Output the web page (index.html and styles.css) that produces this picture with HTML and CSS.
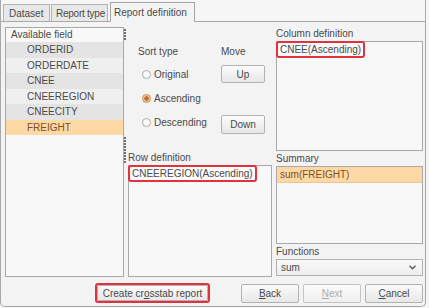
FILE: index.html
```html
<!DOCTYPE html>
<html>
<head>
    <meta charset="utf-8">
    <title>Report definition</title>
    <link rel="stylesheet" href="styles.css">
</head>
<body>
    <div class="dialog">
        <div class="tabs">
            <div class="tab tab-dataset">Dataset</div>
            <div class="tab tab-type">Report type</div>
            <div class="tab tab-def active">Report definition</div>
        </div>

        <div class="panel">
            <div class="main">
                <div class="field-list">
                    <div class="list-head">Available field</div>
                    <div class="field">ORDERID</div>
                    <div class="field">ORDERDATE</div>
                    <div class="field">CNEE</div>
                    <div class="field">CNEEREGION</div>
                    <div class="field">CNEECITY</div>
                    <div class="field selected">FREIGHT</div>
                </div>

                <div class="splitter">
                    <div class="grip short"></div>
                    <div class="grip long"></div>
                </div>

                <div class="middle">
                    <div class="sort-area">
                        <div class="sort-col">
                            <div class="caption">Sort type</div>
                            <div class="radio"><span class="dot"></span>Original</div>
                            <div class="radio"><span class="dot checked"></span>Ascending</div>
                            <div class="radio"><span class="dot"></span>Descending</div>
                        </div>
                        <div class="move-col">
                            <div class="caption">Move</div>
                            <button class="btn up">Up</button>
                            <button class="btn down">Down</button>
                        </div>
                    </div>
                    <div class="box-label">Row definition</div>
                    <div class="box row-box">
                        <span class="marked">CNEEREGION(Ascending)</span>
                    </div>
                </div>

                <div class="right">
                    <div class="box-label">Column definition</div>
                    <div class="box col-box">
                        <span class="marked">CNEE(Ascending)</span>
                    </div>
                    <div class="box-label">Summary</div>
                    <div class="box sum-box">
                        <div class="sum-item">sum(FREIGHT)</div>
                    </div>
                    <div class="box-label">Functions</div>
                    <div class="combo">
                        <span>sum</span>
                        <svg width="7" height="5" viewBox="0 0 7 5"><path d="M0.5 0.8 L3.5 3.8 L6.5 0.8" fill="none" stroke="#555" stroke-width="1.3"/></svg>
                    </div>
                </div>
            </div>

            <div class="footer">
                <span class="marked-btn"><button class="btn create">Create cr<u>o</u>sstab report</button></span>
                <button class="btn nav"><u>B</u>ack</button>
                <button class="btn nav" disabled><u>N</u>ext</button>
                <button class="btn nav"><u>C</u>ancel</button>
            </div>
        </div>
    </div>
</body>
</html>
```

FILE: styles.css
```css
body {
    margin: 0;
    width: 429px;
    height: 308px;
    background: #f6f6f6;
    font-family: "Liberation Sans", Arial, sans-serif;
    font-size: 10px;
    color: #4a4a4a;
}

.dialog {
    width: 426px;
    height: 307px;
    box-sizing: border-box;
    border: 1px solid #a8a8a8;
    border-top: none;
    border-radius: 0 0 5px 5px;
    display: flex;
    flex-direction: column;
    background: #f3f3f3;
}

.tabs {
    height: 21px;
    display: flex;
    align-items: flex-end;
    padding-left: 2px;
    background: #f6f6f6;
}

.tab {
    height: 17px;
    line-height: 17px;
    padding-left: 5px;
    box-sizing: border-box;
    border: 1px solid #b4b4b4;
    border-bottom: none;
    background: #e8e8e8;
    color: #4a4a4a;
    white-space: nowrap;
    overflow: hidden;
}

.tab-dataset {
    width: 47px;
}

.tab-type {
    width: 57px;
    margin-left: 1px;
    padding-left: 4px;
    letter-spacing: -0.25px;
}

.tab.active {
    width: 85px;
    height: 20px;
    line-height: 19px;
    margin-left: 2px;
    margin-bottom: -1px;
    padding-left: 3px;
    background: #f3f3f3;
    border-color: #a4a4a4;
    position: relative;
}

.panel {
    flex: 1;
    border-top: 1px solid #a8a8a8;
    padding: 5px 2px 0 4px;
    display: flex;
    flex-direction: column;
}

.main {
    height: 250px;
    display: flex;
}

.field-list {
    width: 119px;
    box-sizing: border-box;
    border: 1px solid #a8a8a8;
    background: #f8f8f8;
}

.list-head {
    height: 14px;
    line-height: 13px;
    padding-left: 5px;
}

.field {
    height: 15.5px;
    line-height: 15.5px;
    padding-left: 21px;
    background: #efefef;
}

.field:nth-child(even) {
    background: #e4e4e4;
}

.field.selected {
    background: #fcd8a5;
    color: #7c5124;
}

.splitter {
    width: 4px;
    flex: none;
    display: grid;
    grid-template-rows: 2px 11px 97px 26px;
    align-content: start;
}

.grip {
    width: 2px;
    background: repeating-linear-gradient(to bottom, #6e6e6e 0, #6e6e6e 2px, transparent 2px, transparent 3px);
}

.grip.short {
    grid-row: 2;
}

.grip.long {
    grid-row: 4;
}

.middle {
    width: 144px;
    display: flex;
    flex-direction: column;
    margin-right: 4px;
}

.sort-area {
    height: 123px;
    display: flex;
    padding: 18px 0 0 10px;
    box-sizing: border-box;
}

.caption {
    height: 14px;
    line-height: 14px;
}

.sort-col {
    width: 83px;
}

.sort-col .caption {
    margin-bottom: 3px;
}

.radio {
    height: 24px;
    display: flex;
    align-items: center;
    padding-left: 4px;
    gap: 3px;
}

.dot {
    width: 9px;
    height: 9px;
    box-sizing: border-box;
    border: 1px solid #ababab;
    border-radius: 50%;
    background: #fbfbfb;
}

.dot.checked {
    border-color: #c48a52;
    background: radial-gradient(circle, #c0702e 0 2px, #f3cfa5 2.5px);
}

.move-col {
    width: 44px;
    display: flex;
    flex-direction: column;
}

.btn {
    font-family: inherit;
    font-size: 10px;
    color: #4a4a4a;
    border: 1px solid #b2b2b2;
    border-radius: 2px;
    background: linear-gradient(#fbfbfb, #e7e7e7);
    padding: 0;
    box-sizing: border-box;
}

.up {
    margin-top: 6px;
    height: 18px;
}

.down {
    margin-top: 32px;
    height: 19px;
}

.box-label {
    height: 15px;
    line-height: 16px;
}

.right .box-label:first-child {
    height: 14px;
    line-height: 13px;
}

.box {
    box-sizing: border-box;
    border: 1px solid #a8a8a8;
    background: #f8f8f8;
}

.row-box {
    flex: 1;
}

.marked {
    display: inline-block;
    margin: -1px 0 0 -1px;
    height: 17px;
    line-height: 13px;
    padding: 0 2px;
    box-sizing: border-box;
    border: 2px solid #e2323f;
    border-radius: 3px;
    background: #fafafa;
}

.right {
    width: 147px;
    display: flex;
    flex-direction: column;
}

.col-box {
    height: 110px;
}

.sum-box {
    height: 78px;
}

.sum-item {
    height: 15px;
    line-height: 15px;
    padding-left: 3px;
    background: #fcd8a5;
    border-bottom: 1px solid #efc48e;
    color: #7c5124;
}

.combo {
    height: 17px;
    box-sizing: border-box;
    border: 1px solid #b0b0b0;
    background: linear-gradient(#fafafa, #ededed);
    display: flex;
    align-items: center;
    justify-content: space-between;
    padding: 0 6px 0 4px;
}

.footer {
    display: flex;
    justify-content: flex-end;
    align-items: flex-start;
    padding-top: 6px;
    gap: 4px;
}

.marked-btn {
    display: inline-flex;
    border: 2px solid #e2323f;
    border-radius: 3px;
    margin-right: 27px;
}

.create {
    width: 111px;
    height: 16px;
    border-radius: 1px;
}

.nav {
    flex: none;
    width: 58px;
    height: 19px;
    margin-top: 1px;
}

.nav:disabled {
    color: #adadad;
    background: linear-gradient(#fbfbfb, #efefef);
    border-color: #c4c4c4;
}
```
